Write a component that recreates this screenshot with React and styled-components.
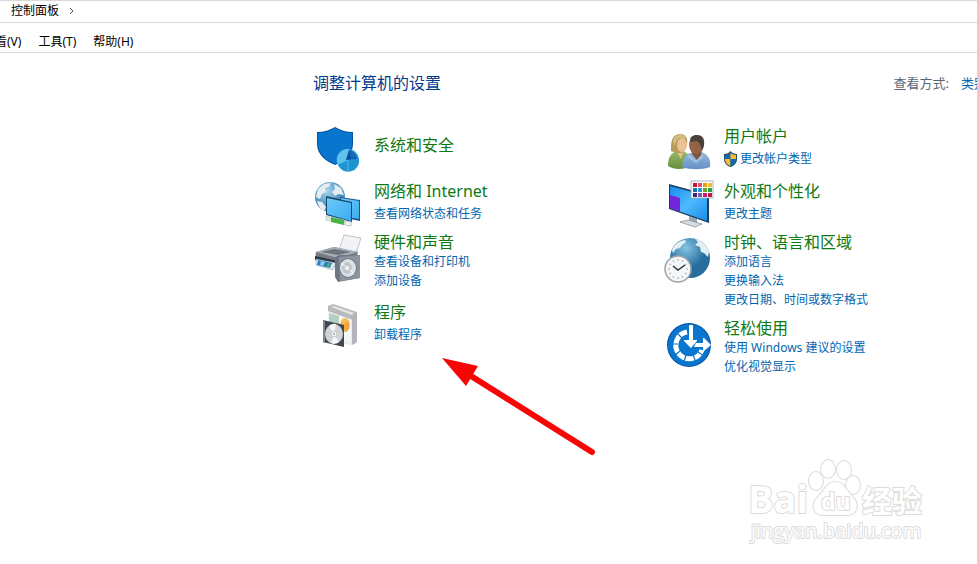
import { useState } from 'react';
import styled, { createGlobalStyle } from 'styled-components';

const GlobalStyle = createGlobalStyle`
  * {
    box-sizing: border-box;
  }
  body {
    margin: 0;
    background: #fff;
    color: #000;
    font-family: "Noto Sans", "Noto Sans CJK SC", sans-serif;
    font-size: 12px;
  }
`;

const Page = styled.div`
  position: relative;
  min-height: 100vh;
  overflow: hidden;
`;

const AddressBar = styled.nav`
  display: flex;
  align-items: center;
  gap: 10px;
  height: 23px;
  padding-bottom: 2px;
  border-top: 1px solid #d9d9d9;
  border-bottom: 1px solid #d9d9d9;
`;

const Chevron = styled.svg`
  flex: none;
  width: 6px;
  height: 8px;
  margin-left: ${(props) => (props.$first ? '-5px' : '0')};
  fill: none;
  stroke: #555;
`;

const Crumb = styled.a`
  color: #000;
  line-height: 20px;
  text-decoration: none;
`;

const MenuBar = styled.div`
  display: flex;
  gap: 17px;
  height: 30px;
  margin-left: -17px;
  padding-top: 9px;
  border-bottom: 1px solid #dcdcdc;
`;

const MenuButton = styled.button`
  height: 20px;
  padding: 0;
  border: 0;
  background: none;
  color: #000;
  font: inherit;
  line-height: 20px;
  white-space: nowrap;
`;

const Content = styled.main`
  padding-left: 313px;
`;

const Header = styled.div`
  display: flex;
  align-items: center;
  justify-content: space-between;
  height: 20px;
  margin: 20px -24px 0 0;
`;

const PageTitle = styled.h1`
  margin: 0;
  color: #003a8c;
  font-size: 16px;
  font-weight: 400;
  line-height: 20px;
`;

const ViewBy = styled.div`
  display: flex;
  gap: 12px;
  color: #5a6472;
  font-size: 13px;
  line-height: 18px;
  white-space: nowrap;
`;

const ViewSelect = styled.select`
  width: 40px;
  height: 18px;
  padding: 0;
  border: 0;
  appearance: none;
  background: none;
  color: #0066b0;
  font: inherit;
`;

const Columns = styled.div`
  display: grid;
  grid-template-columns: minmax(0, 350px) minmax(0, 1fr);
  margin-top: 33px;
`;

const Item = styled.section`
  display: flex;
  gap: 13px;
  padding-bottom: ${(props) => props.$space}px;
`;

const Icon = styled.svg`
  flex: none;
  width: 48px;
  height: 50px;
  overflow: visible;
`;

const ItemTitle = styled.h2`
  margin: ${(props) => (props.$alone ? '9px' : '0')} 0 ${(props) => (props.$loose ? '3px' : '0')};
  font-size: 16px;
  font-weight: 400;
  line-height: 20px;
  white-space: nowrap;

  a {
    color: #0f7a14;
    text-decoration: none;
  }
`;

const TaskLink = styled.a`
  display: flex;
  align-items: center;
  gap: 3px;
  color: #0066b0;
  line-height: 19px;
  text-decoration: none;
  white-space: nowrap;
`;

const UacShield = styled.svg`
  width: 13px;
  height: 16px;
`;

const Arrow = styled.svg`
  position: absolute;
  left: 440px;
  top: 355px;
  width: 160px;
  height: 105px;
  pointer-events: none;
`;

const Watermark = styled.svg`
  position: absolute;
  right: 47px;
  bottom: 14px;
  width: 190px;
  height: 94px;
  fill: #fff;
  stroke: #dcdcdc;
  stroke-width: 2px;
  paint-order: stroke;
  font-family: "Open Sans", "Noto Sans CJK SC", sans-serif;
  pointer-events: none;
`;

function SecurityIcon() {
  return (
    <Icon viewBox="0 0 48 50" aria-hidden="true">
      <path d="M4 6C11 6 17 4 22 1c5 3 11 5 18 5v12c0 10-8 17-18 21C12 35 4 28 4 18z" fill="#07549f" />
      <path d="M5 7c7 0 12-2 17-5 5 3 10 5 17 5v11c0 9-8 16-17 20C13 34 5 27 5 18z" fill="#0875ce" />
      <circle cx="35" cy="34" r="11" fill="#2fa3dc" />
      <path d="M35 34l1-11a11 11 0 0 0-11 16z" fill="#5cc3ec" />
      <path d="M36 24c4 1 7 4 8 9l-11 1z" fill="#0a4da2" />
      <path d="M36 24l2 9 6-1c-1-4-4-7-8-8z" fill="#1668bb" />
      <path d="M25 39l10-5 11-1a11 11 0 0 1-21 6z" fill="#1f94d2" />
      <path d="M35 34v11" stroke="#5cc3ec" strokeWidth=".8" />
    </Icon>
  );
}

function NetworkIcon() {
  return (
    <Icon viewBox="0 0 48 50" aria-hidden="true">
      <defs>
        <radialGradient id="netGlobe" cx="40%" cy="30%">
          <stop offset="0" stopColor="#a6d5ec" />
          <stop offset="1" stopColor="#4a8fba" />
        </radialGradient>
        <linearGradient id="netScreen" x1="0" y1="0" x2="1" y2="1">
          <stop offset="0" stopColor="#6ccbfa" />
          <stop offset="1" stopColor="#3aaaee" />
        </linearGradient>
      </defs>
      <circle cx="17" cy="16" r="15" fill="url(#netGlobe)" />
      <path d="M5 8l6-5 7-1-2 4-4 1 1 4-4 2-2 5-4-2zM4 20l5 1 4 5-2 4c-4-2-6-6-7-10zM21 3l7 4 3 7-6-1-3 2-3-4 3-3z" fill="#e4edf1" />
      <path d="M27 16l20 3v21l-20-4z" fill="#1c5988" />
      <path d="M28 17l18 3v18l-18-3z" fill="url(#netScreen)" />
      <path d="M13 15l26 6v20l-26-7z" fill="#16496f" />
      <path d="M14 17l24 5v18l-24-7z" fill="url(#netScreen)" />
      <path d="M13 35l25 6v4l-25-6z" fill="#dfe9e2" stroke="#a6b3ab" strokeWidth=".5" />
      <path d="M18 36l13 3v5l-13-3z" fill="#45b545" />
      <path d="M32 40l6 1v4l-6-1z" fill="#f3f5f3" stroke="#9da7a0" strokeWidth=".5" />
    </Icon>
  );
}

function HardwareIcon() {
  return (
    <Icon viewBox="0 0 48 50" aria-hidden="true">
      <path d="M31 3l17 3-5 16-17-4z" fill="#f1f3f6" stroke="#a7adb3" strokeWidth=".7" />
      <path d="M3 20l18-5 24 5-2 8-17 8L2 28z" fill="#747b84" />
      <path d="M3 20l18-5 24 5-20 6z" fill="#a9afb7" />
      <path d="M8 20l13-3 17 3-13 3z" fill="#6b737d" />
      <path d="M2 24l23 5v5L2 28z" fill="#293746" />
      <path d="M3 27l20 4-3 7-17-5z" fill="#dce8f1" stroke="#8c969e" strokeWidth=".5" />
      <path d="M5 28l14 3-2 5-13-3z" fill="#2481c4" />
      <path d="M8 29l4 1-2 4-3-1z" fill="#8fd0e8" />
      <path d="M15 31l3 1-2 3-3-1z" fill="#4dac67" />
      <path d="M22 25l5-2h20v23l-22 4-3-5z" fill="#6c7680" />
      <path d="M26 25l21-2v23l-20 3z" fill="#8b959f" />
      <ellipse cx="35" cy="36" rx="9" ry="10" fill="#737d87" />
      <ellipse cx="35" cy="36" rx="8" ry="9" fill="#dfe2e5" />
      <ellipse cx="34" cy="36" rx="5" ry="6" fill="#c0c6cc" />
      <ellipse cx="34" cy="36" rx="2" ry="2" fill="#f2f4f5" />
      <path d="M28 31l4 3M37 38l4 4" stroke="#fff" />
    </Icon>
  );
}

function ProgramsIcon() {
  return (
    <Icon viewBox="0 0 48 50" aria-hidden="true">
      <path d="M15 4l28 8v30l-7 1-21-7z" fill="#e9ebec" />
      <path d="M15 4l5-2 24 8v5l-4 3-25-9z" fill="#b6babd" />
      <path d="M18 5l3-1 20 7-2 2z" fill="#e5e7e8" />
      <path d="M39 15l5-4v29l-5 3z" fill="#b1b5b9" />
      <path d="M15 10l23 8v23l-23-7z" fill="#f6f7f7" />
      <path d="M16 11l10 3v9l-10-2z" fill="#b5d0c0" />
      <ellipse cx="32" cy="23" rx="5" ry="7" fill="#f6bb5a" />
      <path d="M29 23l6-4 1 7-3 4z" fill="#f3a53f" />
      <path d="M10 18l21 5v22l-21-5z" fill="#41474e" />
      <path d="M10 18l2 1v22l-2-1z" fill="#7d858d" />
      <ellipse cx="21" cy="32" rx="9" ry="10" fill="#cfd4d8" />
      <path d="M21 32l-5-8a9 10 0 0 1 7-2zM21 32l5 8a9 10 0 0 1-8 1z" fill="#f5f6f7" />
      <circle cx="21" cy="32" r="3" fill="#eef0f1" stroke="#b5bbc0" strokeWidth=".7" />
      <circle cx="21" cy="32" r="1" fill="#a5abb1" />
    </Icon>
  );
}

function UsersIcon() {
  return (
    <Icon viewBox="0 0 48 50" aria-hidden="true">
      <defs>
        <linearGradient id="manShirt" x1="0" y1="0" x2="0" y2="1">
          <stop offset="0" stopColor="#95b9de" />
          <stop offset="1" stopColor="#6791c3" />
        </linearGradient>
        <linearGradient id="womanShirt" x1="0" y1="0" x2="0" y2="1">
          <stop offset="0" stopColor="#99bd69" />
          <stop offset="1" stopColor="#638e3a" />
        </linearGradient>
      </defs>
      <path d="M5 40c0-9 3-13 9-15l8 1c5 3 6 8 5 14-6 4-16 4-22 0z" fill="url(#womanShirt)" />
      <path d="M12 23l9 1-3 9z" fill="#e5bd92" />
      <path d="M8 21c0-8 3-13 9-13s8 4 7 11l-3 7c-4 2-9 1-13-1z" fill="#b59c5b" />
      <ellipse cx="19" cy="19" rx="5" ry="7" fill="#ebc298" />
      <path d="M12 20c1-7 4-10 11-7l-1-3c-4-3-10-2-12 5z" fill="#d3bf80" />
      <path d="M19 41c1-10 5-14 12-15h8c6 3 9 7 8 15-8 3-20 3-28 0z" fill="url(#manShirt)" />
      <path d="M29 24h10l-1 5-4 5-5-6z" fill="#80543c" />
      <ellipse cx="33" cy="19" rx="7" ry="9" fill="#946247" />
      <path d="M27 16c0-5 2-7 7-7 6 0 8 4 7 11l-2 5-2-7-3-3z" fill="#4a413b" />
      <path d="M26 29l7 6 6-6 1 2-7 6-8-6z" fill="#a9c6e5" />
    </Icon>
  );
}

const swatches = [
  '#d01028', '#d85068', '#e89a18', '#e8c020',
  '#1474b8', '#2b93c7', '#6da523', '#24a244',
  '#3b2285', '#8450a0', '#bd227c', '#c21842',
];

function AppearanceIcon() {
  return (
    <Icon viewBox="0 0 48 50" aria-hidden="true">
      <defs>
        <linearGradient id="deskScreen" x1="0" y1="0" x2="1" y2="1">
          <stop offset="0" stopColor="#168be7" />
          <stop offset=".5" stopColor="#50baff" />
          <stop offset="1" stopColor="#168de7" />
        </linearGradient>
      </defs>
      <path d="M26 35l8 2v6l-8-2z" fill="#9ca6af" />
      <path d="M17 41l8-2 14 4-7 3z" fill="#d6dce0" stroke="#7f8b94" strokeWidth=".7" />
      <path d="M6 3l40 11v28L6 28z" fill="#193e60" />
      <path d="M7 5l37 10v25L7 27z" fill="url(#deskScreen)" />
      <path d="M7 14l10 3v14L7 27z" fill="#7227dc" />
      <path d="M28 0h22v17H28z" fill="#fff" stroke="#98a0a8" strokeWidth=".8" />
      {swatches.map((color, i) => (
        <rect key={color} x={30 + (i % 4) * 5} y={2 + Math.floor(i / 4) * 5} width="4" height="4" fill={color} />
      ))}
    </Icon>
  );
}

function ClockIcon() {
  const ticks = [0, 30, 60, 90, 120, 150, 180, 210, 240, 270, 300, 330];
  return (
    <Icon viewBox="0 0 48 50" aria-hidden="true">
      <defs>
        <radialGradient id="clockGlobe" cx="40%" cy="25%">
          <stop offset="0" stopColor="#85c4e2" />
          <stop offset="1" stopColor="#276e9f" />
        </radialGradient>
      </defs>
      <circle cx="27" cy="26" r="20" fill="url(#clockGlobe)" />
      <path d="M9 18c3-6 7-9 13-10l1 2-4 3-2 3-4 1-3 4zM32 7c7 1 11 6 14 12l-1 6-4-4-3-1-1-5-5-2 3-3z" fill="#e4eff4" />
      <circle cx="15" cy="37" r="13" fill="#f4f6f7" stroke="#9ba3a9" strokeWidth="1.5" />
      {ticks.map((angle) => (
        <path key={angle} d="M15 27v2" stroke="#8b949a" strokeWidth=".8" transform={`rotate(${angle} 15 37)`} />
      ))}
      <path d="M10 34l5 4 7-5" fill="none" stroke="#263038" strokeWidth="1.4" />
    </Icon>
  );
}

function EaseIcon() {
  return (
    <Icon viewBox="0 0 48 50" aria-hidden="true">
      <circle cx="26" cy="27" r="22" fill="#07549f" />
      <circle cx="26" cy="27" r="21" fill="#0875ce" />
      <path d="M24 14A13.500 13.500 0 1 0 39 32" fill="none" stroke="#fff" strokeWidth="5" />
      <path d="M19 20l-6-6M15 26H8M17 33l-6 5M23 37l-2 7M30 37l3 7M35 34l6 4" stroke="#0875ce" strokeWidth="1.2" />
      <path d="M26 7h4v15h4v1l-6 7-7-7v-1h5z" fill="#fff" />
      <path d="M33 25h7v-5h1l7 7-7 6h-1v-4h-9z" fill="#fff" />
    </Icon>
  );
}

function Uac() {
  return (
    <UacShield viewBox="0 0 26 32" aria-hidden="true">
      <path d="M0 6c6 0 10-2 13-6 3 4 7 6 13 6v10c0 8-6 14-13 16C6 30 0 24 0 16z" fill="#24506f" />
      <path d="M2 8c4 0 8-2 11-4v12H2z" fill="#1768b0" />
      <path d="M13 4c3 2 7 4 11 4v8H13z" fill="#f7bd35" />
      <path d="M2 16h11v14C6 28 2 22 2 16z" fill="#f7bd35" />
      <path d="M13 16h11c0 6-4 12-11 14z" fill="#1768b0" />
    </UacShield>
  );
}

const leftItems = [
  { title: '系统和安全', icon: SecurityIcon, space: 5, links: [] },
  { title: '网络和 Internet', icon: NetworkIcon, space: 1, links: ['查看网络状态和任务'] },
  { title: '硬件和声音', icon: HardwareIcon, space: 12, links: ['查看设备和打印机', '添加设备'] },
  { title: '程序', icon: ProgramsIcon, space: 0, links: ['卸载程序'] },
];

const rightItems = [
  { title: '用户帐户', icon: UsersIcon, space: 5, links: ['更改帐户类型'], shield: true },
  { title: '外观和个性化', icon: AppearanceIcon, space: 1, links: ['更改主题'] },
  { title: '时钟、语言和区域', icon: ClockIcon, space: 9, links: ['添加语言', '更换输入法', '更改日期、时间或数字格式'] },
  { title: '轻松使用', icon: EaseIcon, space: 0, links: ['使用 Windows 建议的设置', '优化视觉显示'] },
];

function CategoryList({ items }) {
  return (
    <div>
      {items.map((item) => {
        const ItemIcon = item.icon;
        return (
          <Item key={item.title} $space={item.space}>
            <ItemIcon />
            <div>
              <ItemTitle $alone={item.links.length === 0} $loose={item.links.length === 1}>
                <a href="#">{item.title}</a>
              </ItemTitle>
              {item.links.map((link) => (
                <TaskLink key={link} href="#">
                  {item.shield && <Uac />}
                  {link}
                </TaskLink>
              ))}
            </div>
          </Item>
        );
      })}
    </div>
  );
}

export default function App() {
  const [view, setView] = useState('类别');

  return (
    <Page>
      <GlobalStyle />
      <AddressBar>
        <Chevron $first viewBox="0 0 6 8"><path d="M1 1l3 3-3 3" /></Chevron>
        <Crumb href="#">控制面板</Crumb>
        <Chevron viewBox="0 0 6 8"><path d="M1 1l3 3-3 3" /></Chevron>
      </AddressBar>
      <MenuBar>
        <MenuButton type="button">查看(V)</MenuButton>
        <MenuButton type="button">工具(T)</MenuButton>
        <MenuButton type="button">帮助(H)</MenuButton>
      </MenuBar>
      <Content>
        <Header>
          <PageTitle>调整计算机的设置</PageTitle>
          <ViewBy>
            <label htmlFor="view">查看方式:</label>
            <ViewSelect id="view" value={view} onChange={(e) => setView(e.target.value)}>
              <option>类别</option>
              <option>大图标</option>
              <option>小图标</option>
            </ViewSelect>
          </ViewBy>
        </Header>
        <Columns>
          <CategoryList items={leftItems} />
          <CategoryList items={rightItems} />
        </Columns>
      </Content>
      <Arrow viewBox="0 0 160 105" aria-hidden="true">
        <path d="M31 21L152 97" stroke="#f80505" strokeWidth="6" strokeLinecap="round" />
        <path d="M2 3l36 8-12 20z" fill="#f80505" />
      </Arrow>
      <Watermark viewBox="0 0 190 94">
        <ellipse cx="76" cy="25" rx="7" ry="9" />
        <ellipse cx="88" cy="13" rx="7" ry="9" />
        <ellipse cx="104" cy="14" rx="7" ry="9" />
        <ellipse cx="113" cy="29" rx="7" ry="9" />
        <path d="M95 26c9 0 11 8 18 15 7 8 4 18-6 18H84c-11 0-14-10-6-18 7-7 9-15 17-15z" />
        <text x="8" y="57" fontSize="38" fontWeight="700">Bai</text>
        <text x="81" y="54" fontSize="23" fontWeight="700">du</text>
        <text x="122" y="56" fontSize="30" fontWeight="700">经验</text>
        <text x="11" y="82" fontSize="20">jingyan.baidu.com</text>
      </Watermark>
    </Page>
  );
}
